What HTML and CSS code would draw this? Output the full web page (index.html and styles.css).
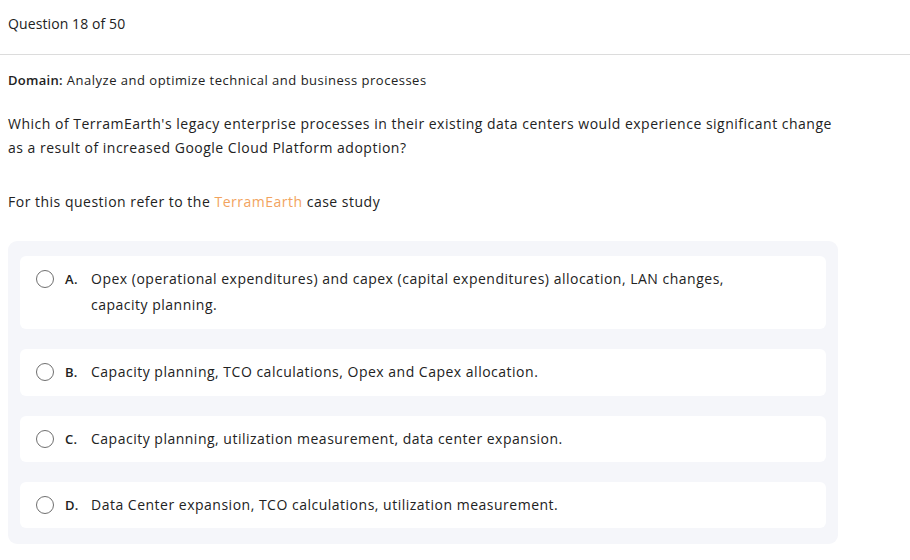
FILE: index.html
```
<!DOCTYPE html>
<html lang="en">
<head>
<meta charset="utf-8">
<title>Question 18 of 50</title>
<link rel="stylesheet" href="styles.css">
</head>
<body>
<header class="qheader">Question 18 of 50</header>
<main class="qbody">
  <p class="domain"><strong>Domain:</strong> Analyze and optimize technical and business processes</p>
  <p class="question">Which of TerramEarth's legacy enterprise processes in their existing data centers would experience significant change as a result of increased Google Cloud Platform adoption?</p>
  <p class="refer">For this question refer to the <a class="case-link" href="#">TerramEarth</a> case study</p>
  <div class="options">
    <label class="option">
      <span class="radio"></span>
      <span class="letter">A.</span>
      <span class="text">Opex (operational expenditures) and capex (capital expenditures) allocation, LAN changes, capacity planning.</span>
    </label>
    <label class="option">
      <span class="radio"></span>
      <span class="letter">B.</span>
      <span class="text">Capacity planning, TCO calculations, Opex and Capex allocation.</span>
    </label>
    <label class="option">
      <span class="radio"></span>
      <span class="letter">C.</span>
      <span class="text">Capacity planning, utilization measurement, data center expansion.</span>
    </label>
    <label class="option">
      <span class="radio"></span>
      <span class="letter">D.</span>
      <span class="text">Data Center expansion, TCO calculations, utilization measurement.</span>
    </label>
  </div>
</main>
</body>
</html>
```
FILE: styles.css
```
* { box-sizing: border-box; }
html, body { margin: 0; padding: 0; background: #ffffff; }
body {
  font-family: "Open Sans", "Liberation Sans", sans-serif;
  color: #222222;
  font-size: 14px;
  letter-spacing: 0.5px;
}
.qheader {
  height: 55px;
  padding: 14px 8px 0;
  line-height: 20px;
  font-size: 14px;
  letter-spacing: 0.1px;
  border-bottom: 1px solid #dcdcdc;
}
.qbody { padding: 0 8px; }
.domain {
  margin: 15px 0 0;
  font-size: 13px;
  line-height: 20px;
}
.domain strong { font-weight: 600; letter-spacing: 0.3px; }
.question {
  margin: 22px 0 0;
  line-height: 24px;
  max-width: 830px;
}
.refer {
  margin: 30px 0 0;
  line-height: 24px;
}
.case-link { color: #f2a35e; text-decoration: none; }
.options {
  margin-top: 27px;
  width: 830px;
  background: #f5f6fa;
  border-radius: 9px;
  padding: 15px 12px 16px;
  display: flex;
  flex-direction: column;
  gap: 20px;
}
.option {
  display: flex;
  align-items: flex-start;
  background: #ffffff;
  border-radius: 6px;
  padding: 10px 16px 10px;
  line-height: 26px;
}
.option:nth-child(-n+2) { padding-bottom: 11px; }
.radio {
  flex: none;
  width: 18px;
  height: 18px;
  margin-top: 4px;
  border: 1px solid #6f6f6f;
  border-radius: 50%;
  background: #fff;
}
.letter {
  flex: none;
  width: 37px;
  padding-left: 11px;
  font-weight: 600;
  font-size: 13px;
  letter-spacing: 0.3px;
}
.text { flex: 1; max-width: 650px; }
```
